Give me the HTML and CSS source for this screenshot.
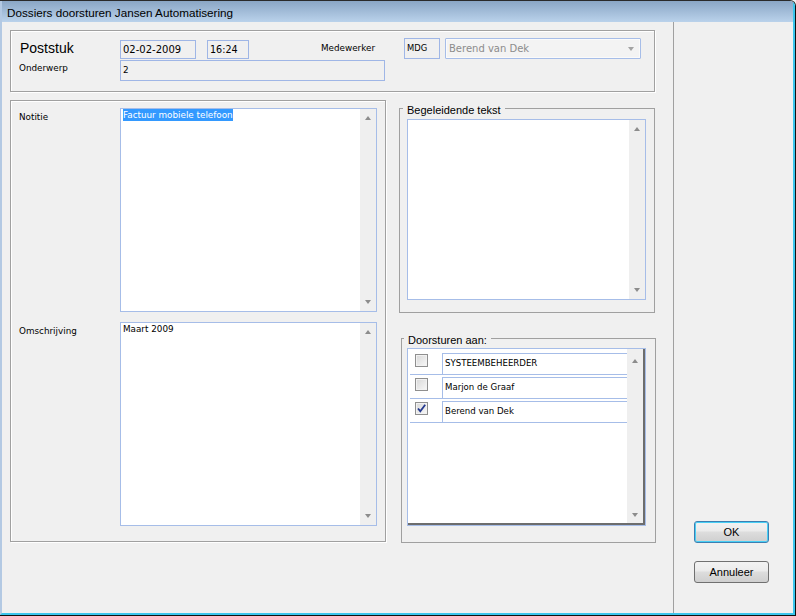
FILE: index.html
```html
<!DOCTYPE html>
<html lang="nl">
<head>
<meta charset="utf-8">
<title>Dossiers doorsturen</title>
<link rel="stylesheet" href="styles.css">
</head>
<body>
<div class="window">
  <div class="frame">
    <div class="titlebar">Dossiers doorsturen Jansen Automatisering</div>
    <div class="client">
      <div class="main">
        <div class="group top-group">
          <div class="row row1">
            <span class="poststuk">Poststuk</span>
            <div class="field date">02-02-2009</div>
            <div class="field time">16:24</div>
            <span class="lbl medewerker">Medewerker</span>
            <div class="field mdg">MDG</div>
            <div class="combo"><span>Berend van Dek</span><span class="combo-arrow"></span></div>
          </div>
          <div class="row row2">
            <span class="lbl onderwerp">Onderwerp</span>
            <div class="field subject">2</div>
          </div>
        </div>
        <div class="lower">
          <div class="group notes">
            <span class="lbl note-lbl">Notitie</span>
            <div class="memo">
              <div class="memo-text"><span class="sel">Factuur mobiele telefoon</span></div>
              <div class="vscroll"><i class="arrow up"></i><i class="arrow down"></i></div>
            </div>
            <span class="lbl note-lbl">Omschrijving</span>
            <div class="memo">
              <div class="memo-text">Maart 2009</div>
              <div class="vscroll"><i class="arrow up"></i><i class="arrow down"></i></div>
            </div>
          </div>
          <div class="side">
            <fieldset class="fs fs-beg">
              <legend>Begeleidende tekst</legend>
              <div class="memo memo-beg">
                <div class="memo-text"></div>
                <div class="vscroll"><i class="arrow up"></i><i class="arrow down"></i></div>
              </div>
            </fieldset>
            <fieldset class="fs fs-door">
              <legend>Doorsturen aan:</legend>
              <div class="list">
                <div class="list-inner">
                  <div class="rows">
                    <div class="item">
                      <span class="check"></span>
                      <div class="item-field">SYSTEEMBEHEERDER</div>
                    </div>
                    <div class="item">
                      <span class="check"></span>
                      <div class="item-field">Marjon de Graaf</div>
                    </div>
                    <div class="item">
                      <span class="check checked"><svg viewBox="0 0 11 11" width="11" height="11"><path d="M2 5.5 L4.3 8.2 L9.2 1.8" fill="none" stroke="#253a8f" stroke-width="1.8"/></svg></span>
                      <div class="item-field">Berend van Dek</div>
                    </div>
                  </div>
                  <div class="vscroll list-scroll"><i class="arrow up"></i><i class="arrow down"></i></div>
                </div>
              </div>
            </fieldset>
          </div>
        </div>
      </div>
      <div class="actions">
        <button class="btn btn-default">OK</button>
        <button class="btn">Annuleer</button>
      </div>
    </div>
  </div>
</div>
</body>
</html>
```
FILE: styles.css
```css
* { box-sizing: border-box; }
html, body { margin: 0; padding: 0; }
body {
  width: 796px;
  height: 616px;
  overflow: hidden;
  background: #f0f0f0;
  font-family: "DejaVu Sans", sans-serif;
  font-size: 8.8px;
  color: #000;
}
.window {
  width: 796px;
  height: 616px;
  display: flex;
  flex-direction: column;
  border-top: 1px solid #2a2a2a;
  border-right: 1px solid #111;
  border-bottom: 1px solid #111;
  border-top-right-radius: 6px;
  overflow: hidden;
  background: #f0f0f0;
}
.frame {
  flex: 1;
  display: flex;
  flex-direction: column;
  border-left: 2px solid #b3c9e3;
  border-right: 2px solid #3bc5ec;
  border-bottom: 2px solid #3bc5ec;
}
.titlebar {
  height: 21px;
  padding: 2px 0 0 5px;
  line-height: 19px;
  background: linear-gradient(#8aa6c5, #bad2eb);
  font-family: "Liberation Sans", sans-serif;
  font-size: 11.7px;
  color: #000;
}
.client {
  flex: 1;
  display: flex;
}
.main {
  width: 672px;
  border-right: 1px solid #a0a0a0;
  padding: 8px 0 0 8px;
}
.actions {
  flex: 1;
  display: flex;
  flex-direction: column;
  justify-content: flex-end;
  align-items: flex-start;
  gap: 18px;
  padding: 0 0 30px 20px;
}

.group {
  border: 1px solid #a0a0a0;
  box-shadow: 1px 1px 0 #fff, inset 1px 1px 0 #fff;
}
.lbl { line-height: 12px; white-space: nowrap; }

.top-group {
  width: 645px;
  height: 62px;
  padding: 7px 0 0 8px;
}
.row { display: flex; }
.row1 { height: 21px; align-items: flex-start; }
.row2 { height: 21px; margin-top: 1px; align-items: flex-start; }
.poststuk {
  width: 101px;
  padding-left: 1px;
  margin-top: 2px;
  font-family: "Liberation Sans", sans-serif;
  font-size: 14px;
  line-height: 16px;
}
.field {
  border: 1px solid #9fb6e6;
  background: #f0f0f0;
  padding-left: 2px;
  white-space: nowrap;
}
.date {
  width: 76px;
  height: 19px;
  margin-top: 2px;
  font-size: 10px;
  line-height: 17px;
}
.time {
  width: 42px;
  height: 19px;
  margin-top: 2px;
  margin-left: 11px;
  font-size: 9.6px;
  line-height: 17px;
}
.medewerker {
  width: 83px;
  margin-left: 72px;
  padding-top: 4px;
}
.mdg {
  width: 36px;
  height: 21px;
  line-height: 19px;
  font-size: 8.4px;
}
.combo {
  width: 196px;
  height: 21px;
  margin-left: 5px;
  border: 1px solid #a6bde8;
  border-radius: 1px;
  box-shadow: inset 0 0 0 1px #fafafa;
  background: #f3f3f3;
  color: #8c8c8c;
  font-size: 10px;
  display: flex;
  align-items: center;
  justify-content: space-between;
  padding: 0 6px 0 3px;
}
.combo-arrow {
  width: 0;
  height: 0;
  border-left: 3.5px solid transparent;
  border-right: 3.5px solid transparent;
  border-top: 4px solid #a3a3a3;
}
.onderwerp { width: 101px; padding-top: 2px; }
.subject {
  width: 265px;
  height: 21px;
  line-height: 19px;
}

.lower {
  display: flex;
  margin-top: 8px;
  align-items: flex-start;
}
.notes {
  width: 376px;
  height: 442px;
  padding: 7px 8px 0 8px;
  display: grid;
  grid-template-columns: 101px 257px;
  grid-template-rows: 204px 204px;
  row-gap: 10px;
  align-items: start;
}
.note-lbl { padding-top: 3px; }
.memo {
  height: 204px;
  border: 1px solid #a6bde8;
  background: #fff;
  display: flex;
}
.memo-text {
  flex: 1;
  padding-left: 2px;
  line-height: 12px;
  white-space: nowrap;
}
.sel {
  display: inline-block;
  line-height: 12px;
  background: #3399ff;
  color: #fff;
}
.vscroll {
  width: 16px;
  background: #efefef;
  display: flex;
  flex-direction: column;
  justify-content: space-between;
  align-items: center;
  padding: 7px 0;
}
.arrow {
  display: block;
  width: 0;
  height: 0;
  border-left: 3.5px solid transparent;
  border-right: 3.5px solid transparent;
}
.arrow.up { border-bottom: 4px solid #8c8c8c; }
.arrow.down { border-top: 4px solid #8c8c8c; }

.side {
  margin-left: 13px;
  width: 257px;
}
.fs {
  margin: 0;
  min-width: 0;
  border: 1px solid #a0a0a0;
  padding-left: 0;
  padding-right: 0;
}
.fs legend {
  font-family: "Liberation Sans", sans-serif;
  font-size: 11px;
  line-height: 12px;
  padding: 3px 4px 0;
  margin-left: 3px;
  color: #000;
}
.fs-beg {
  width: 256px;
  height: 212px;
  margin-top: 1px;
  padding-top: 3px;
  padding-bottom: 0;
}
.memo-beg {
  width: 239px;
  height: 181px;
  margin-left: 7px;
}
.fs-door {
  width: 255px;
  height: 212px;
  margin: 18px 0 0 2px;
  padding-top: 2px;
  padding-bottom: 0;
}
.fs-door legend { margin-left: 2px; }
.list {
  width: 239px;
  height: 178px;
  margin-left: 5px;
  border: 1px solid #a6bde8;
  background: #fff;
  display: flex;
}
.list-inner {
  flex: 1;
  display: flex;
  border-right: 2px solid #6d6d6d;
  border-bottom: 2px solid #6d6d6d;
}
.rows {
  flex: 1;
  padding: 2px 0 0 2px;
}
.item {
  display: flex;
  align-items: flex-start;
  height: 24px;
  border-bottom: 1px solid #a6bde8;
}
.check {
  width: 13px;
  height: 13px;
  margin: 3px 0 0 5px;
  border: 1px solid #8f8f8f;
  background: linear-gradient(135deg, #d8d8d8, #f8f8f8);
  box-shadow: inset 0 0 0 1px #f2f2f2;
  display: flex;
  align-items: center;
  justify-content: center;
}
.item-field {
  flex: 1;
  align-self: stretch;
  margin: 2px 0 0 14px;
  border-top: 1px solid #a6bde8;
  border-left: 1px solid #a6bde8;
  padding-left: 2px;
  line-height: 18px;
  font-size: 8.6px;
  white-space: nowrap;
}
.list-scroll { padding: 10px 0 6px; }

.btn {
  width: 75px;
  height: 22px;
  padding: 0;
  border: 1px solid #707070;
  border-radius: 3px;
  background: linear-gradient(#f2f2f2, #ebebeb 45%, #dddddd 50%, #cfcfcf);
  font-family: "Liberation Sans", sans-serif;
  font-size: 11px;
  color: #000;
}
.btn-default {
  border-color: #3c7fb1;
  box-shadow: inset 0 0 0 1px #48cff5;
}
```
